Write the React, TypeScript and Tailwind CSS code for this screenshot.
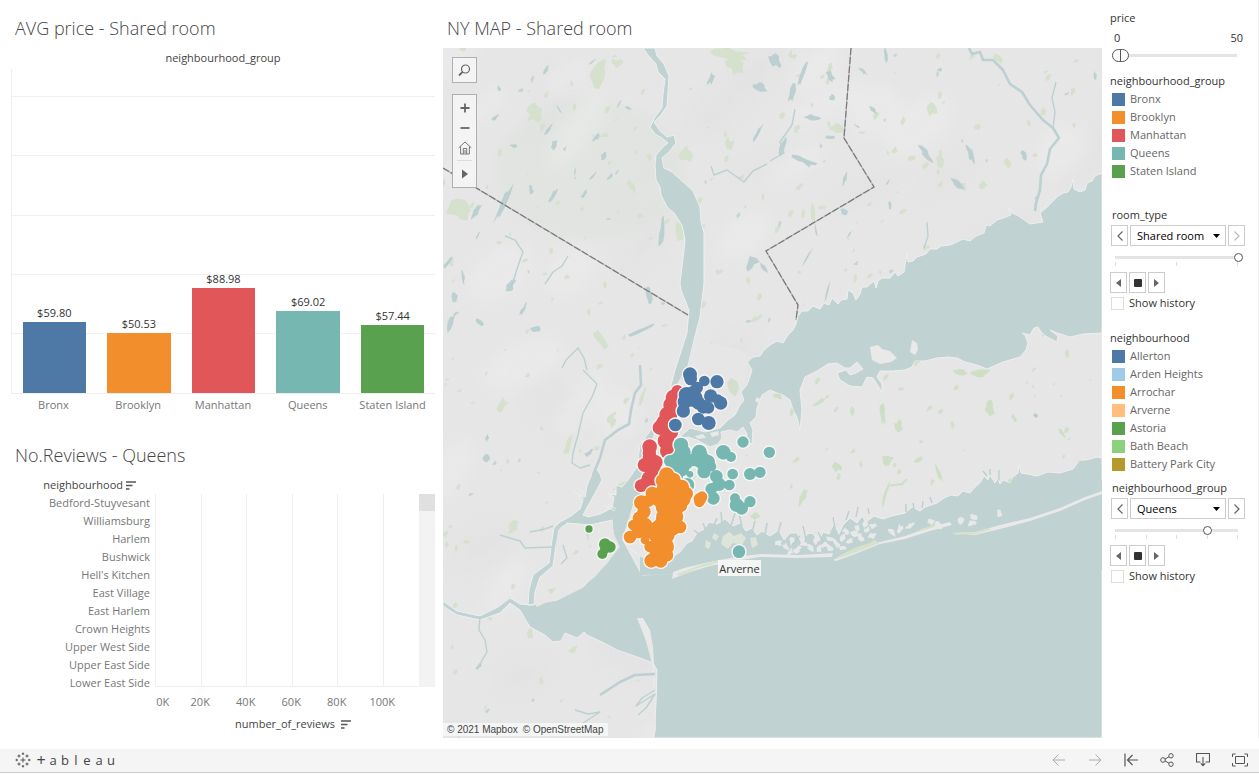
import { useId, useState } from "react";
import type { ReactNode } from "react";

const SANS = "font-['Open_Sans','Noto_Sans',sans-serif]";

type Named = { name: string; color: string };

const boroughs: (Named & { value: number })[] = [
  { name: "Bronx", color: "#4e79a7", value: 59.8 },
  { name: "Brooklyn", color: "#f28e2b", value: 50.53 },
  { name: "Manhattan", color: "#e15759", value: 88.98 },
  { name: "Queens", color: "#76b7b2", value: 69.02 },
  { name: "Staten Island", color: "#59a14f", value: 57.44 },
];

const neighbourhoods: Named[] = [
  { name: "Allerton", color: "#4e79a7" },
  { name: "Arden Heights", color: "#a0cbe8" },
  { name: "Arrochar", color: "#f28e2b" },
  { name: "Arverne", color: "#ffbe7d" },
  { name: "Astoria", color: "#59a14f" },
  { name: "Bath Beach", color: "#8cd17d" },
  { name: "Battery Park City", color: "#b6992d" },
];

const reviewRows = [
  "Bedford-Stuyvesant",
  "Williamsburg",
  "Harlem",
  "Bushwick",
  "Hell's Kitchen",
  "East Village",
  "East Harlem",
  "Crown Heights",
  "Upper West Side",
  "Upper East Side",
  "Lower East Side",
];

/* ---------- Map data, in map units ---------- */

/* Long Island Sound and the East River; the island is painted over it. */
const SOUND =
  "M1102 173L1095 176 1092 181 1087 183 1085 190 1080 192 1074 189 1073 179 1071 187 1068 192 1063 193 1057 197 1053 201 1046 208 1040 213 1043 222 1030 224 1023 219 1017 215 1012 213 1008 207 1011 215 1003 218 997 220 990 226 986 225 984 233 976 236 970 241 963 239 957 242 950 245 941 246 937 249 930 249 926 254 917 257 913 261 908 262 907 254 905 265 904 272 898 276 895 272 890 278 882 278 878 281 876 288 874 281 867 287 862 287 860 294 856 300 853 293 848 290 847 299 841 300 838 304 832 298 829 305 824 303 820 309 813 306 808 311 802 311 798 316 796 324 793 330 788 335 783 343 777 341 770 345 764 350 760 356 753 357 747 362 752 370 747 385 741 392 744 400 740 405 735 415 728 420 720 428 705 432 690 428 680 437 668 462 650 490 636 497 640 545 700 565 1102 560 Z";

/* Ocean, Raritan Bay, harbour and Hudson. */
const OCEAN =
  "M645 480L638 500 632 515 623 540 642 575 770 570 1102 480 1102 738 654 738 656 703 657 670 653 663 640 658 617 650 604 643 587 635 584 632 577 638 570 635 565 633 561 641 553 642 545 635 530 627 524 617 520 610 510 603 500 613 480 620 457 615 443 606 443 601 457 611 480 616 498 607 510 598 520 604 530 605 557 600 583 587 607 563 617 548 613 533 612 520 590 525 567 523 560 530 556 545 553 566 540 577 535 592 534 605 528 605 529 590 533 575 549 563 552 540 554 528 560 522 571 516 580 509 583 500 578 495 585 497 587 486 590 478 596 468 600 474 602 480 594 495 583 515 588 517 600 514 612 508 614 497 608 494 616 495 616 485 622 487 628 480 637 467 640 445 653 427 667 400 675 370 687 333 689 310 681 290 680 283 684 250 685 240 682 225 674 213 667 207 661 195 660 187 656 180 655 165 656 155 664 146 668 143 662 138 655 134 650 127 655 117 662 108 663 94 665 79 658 72 656 64 648 55 643 48 655 48 657 56 664 64 669 76 668 92 667 106 661 115 654 122 660 131 667 137 674 135 676 143 669 152 662 158 664 168 672 172 682 181 693 191 697 200 700 207 701 222 704 233 704 283 700 317 694 340 687 370 678 400 670 425 657 450 Z";

const LONG_ISLAND =
  "M677 440L688 437 697 440 710 447 718 444 722 438 721 432 730 430 737 432 743 427 747 434 746 442 752 444 753 430 750 423 756 417 757 408 762 395 770 390 777 393 783 395 790 400 793 410 797 417 800 430 802 410 800 390 805 377 817 371 828 364 837 363 845 368 850 368 857 362 863 369 856 373 850 375 846 370 837 373 840 380 850 386 862 387 867 377 873 378 882 392 882 384 877 377 880 371 893 371 905 370 912 367 915 361 925 361 937 358 948 357 957 358 965 362 977 365 987 369 1003 362 1020 357 1026 350 1028 343 1025 335 1022 333 1030 335 1034 328 1038 327 1041 332 1047 337 1057 342 1058 336 1050 330 1057 333 1070 337 1083 334 1102 333 1102 458 1097 457 1090 459 1085 460 1080 460 1073 469 1060 473 1048 472 1037 476 1027 474 1021 473 1019 465 1018 473 1012 478 1010 483 1003 480 1000 484 998 478 995 483 990 475 988 480 984 476 980 483 975 487 970 493 963 491 958 496 951 495 944 498 937 503 925 507 920 511 912 507 905 513 892 516 883 519 874 516 866 522 862 516 857 523 850 518 843 525 839 534 834 523 829 534 823 532 819 541 812 533 807 534 802 544 797 533 790 533 784 540 779 530 770 536 762 531 757 535 752 528 746 531 740 523 733 526 725 519 717 524 709 522 704 529 697 533 692 541 687 543 680 552 673 557 660 562 642 557 632 550 623 540 627 525 630 517 634 503 641 495 652 486 664 470 672 450 Z";

const STATEN =
  "M563 525L590 527 612 522 614 534 620 547 607 563 595 577 583 586 570 594 557 599 545 603 537 607 534 603 539 585 541 580 550 573 556 560 556 545 558 530 Z";

const MANHATTAN = "M682 375L684 388 680 410 672 440 664 465 650 485 643 490 641 478 648 450 657 425 668 400 Z";
const BRONX =
  "M694 340L740 350 752 358 747 364 744 372 748 384 740 391 743 400 737 404 733 413 725 417 715 426 700 428 688 424 680 415 681 390 688 365 Z";

const ISLANDS = [
  "M870 347L878 345 882 349 890 351 897 358 891 362 880 364 872 360 Z",
  "M912 340L917 343 918 350 915 355 910 352 Z",
  "M710 433L718 431 719 435 712 437 Z",
  "M695 436L703 434 706 438 698 439 Z",
  "M757 397L760 399 758 403 755 401 Z",
  "M637 618L643 618 650 630 653 647 655 680 656 730 654 737 654 690 652 664 646 641 Z",
  "M672 579L673 572 684 568 705 563 735 557 760 554 800 555 833 553 832 557 795 558 760 557 735 561 710 566 690 572 Z",
  "M833 560L845 553 865 546 880 542 905 536 930 527 950 522 952 525 930 531 905 539 880 544 850 556 836 561 Z",
  "M950 533L975 532 1000 525 1030 518 1060 508 1085 497 1102 491 1102 494 1085 500 1060 511 1030 521 1000 529 975 535 Z",
];

/* Jamaica Bay, cut out of Long Island, with its marsh islands. */
const JAMAICA =
  "M699 552L697 540 703 533 712 530 720 524 730 527 740 528 749 533 757 537 764 543 770 551 750 553 735 555 718 558 706 562 Z";
const JAMAICA_ISLANDS = [
  "M723 536L729 532 734 536 741 533 746 538 742 545 733 543 728 549 721 544 Z",
  "M714 533L719 536 716 541 712 538 Z",
  "M750 538L756 537 758 545 752 548 Z",
  "M706 540L711 543 709 549 705 547 Z",
];

const MARSH: [number, number][] = [
  [778, 543], [786, 547], [792, 540], [797, 550], [804, 544], [811, 548], [816, 540], [824, 545],
  [831, 539], [837, 544], [843, 537], [849, 541], [855, 534], [861, 538], [867, 530], [872, 536],
  [846, 531], [857, 528], [865, 524], [873, 526], [830, 548], [819, 549], [790, 552], [842, 548],
  [892, 533], [900, 529], [910, 526], [931, 522], [938, 525], [961, 520], [972, 523], [974, 517], [1000, 514],
];

/* lakes: x, y, half length, half width, angle */
const LAKES: number[][] = [
  [503, 203, 24, 3, -66], [476, 211, 10, 3, -55], [662, 233, 17, 3, -85], [649, 295, 9, 4, 90],
  [546, 70, 7, 2, -70], [499, 89, 4, 2, 70], [495, 118, 5, 2, -40], [548, 130, 7, 2, -50],
  [559, 109, 4, 1, 60], [554, 145, 6, 3, -70], [514, 146, 4, 2, 0], [597, 137, 6, 2, -45],
  [604, 156, 5, 3, -65], [619, 104, 6, 1, -60], [628, 108, 4, 2, 20], [531, 190, 5, 3, 80],
  [553, 195, 8, 2, -60], [584, 194, 6, 2, -60], [593, 176, 7, 1, -50], [610, 177, 5, 2, -50],
  [575, 172, 5, 1, -80], [478, 235, 5, 1, -60], [448, 262, 8, 2, -50], [463, 277, 7, 2, 80],
  [454, 297, 6, 3, -70], [510, 286, 9, 5, -60], [451, 322, 11, 3, -70], [480, 322, 5, 3, 50],
  [535, 329, 5, 4, 20], [523, 310, 8, 2, -60], [640, 331, 17, 2, -25], [711, 78, 8, 3, -70],
  [760, 87, 8, 5, 30], [775, 60, 9, 5, 60], [758, 133, 10, 2, -60], [752, 262, 9, 6, -55],
  [764, 268, 9, 2, 50], [792, 93, 10, 4, -70], [802, 75, 14, 2, -70], [830, 76, 9, 4, 70],
  [832, 98, 4, 3, 40], [812, 118, 10, 4, 0], [831, 137, 7, 2, 0], [805, 161, 13, 4, 22],
  [783, 146, 13, 3, -75], [845, 178, 8, 2, -75], [844, 212, 4, 3, 20], [857, 126, 4, 1, 30],
  [886, 56, 8, 2, 85], [863, 71, 6, 2, 40], [873, 110, 5, 2, 40], [926, 154, 13, 3, 50],
  [970, 153, 12, 3, 70], [956, 183, 9, 3, 40], [1024, 155, 6, 3, 60], [1095, 76, 5, 2, 90],
  [890, 205, 5, 2, 90], [808, 256, 10, 1, -60], [816, 230, 7, 1, 80], [827, 293, 12, 1, -75],
  [888, 182, 4, 1, -60], [940, 70, 3, 2, 20], [849, 235, 5, 1, -60], [487, 458, 5, 4, 20],
  [487, 438, 4, 2, 90], [589, 453, 5, 3, -40], [479, 666, 6, 2, -45], [592, 62, 6, 1, -40],
];

const PARKS: number[][] = [
  [461, 210, 16, 13, 30], [598, 75, 18, 8, -65], [617, 63, 7, 5, 0], [535, 113, 10, 9, -30],
  [730, 53, 20, 6, 10], [735, 66, 10, 8, 40], [685, 153, 8, 8, 20], [729, 145, 5, 7, 0],
  [679, 231, 4, 12, -10], [697, 204, 3, 9, 35], [632, 187, 10, 3, 60], [602, 340, 5, 12, -35],
  [567, 277, 3, 3, 0], [837, 128, 8, 6, 0], [932, 108, 5, 9, -10], [940, 160, 4, 10, 0],
  [813, 212, 2, 14, -5], [977, 127, 3, 4, 0], [983, 185, 5, 4, 0], [1008, 163, 4, 5, 0],
  [926, 247, 4, 3, 0], [998, 58, 6, 3, 45], [1044, 112, 3, 5, 20], [502, 405, 5, 9, 30],
  [568, 445, 3, 12, 15], [642, 397, 3, 10, 20], [612, 421, 5, 6, 0], [622, 486, 9, 4, -30],
  [513, 527, 5, 8, 30], [530, 634, 3, 7, 0], [573, 650, 6, 3, -40],
];

const LI_PARKS: number[][] = [
  [887, 461, 8, 6, 0], [836, 467, 6, 5, 30], [898, 427, 6, 7, 20], [990, 408, 5, 9, 0],
  [1016, 484, 9, 6, 0], [803, 497, 3, 10, 25], [886, 493, 2, 15, 15], [883, 415, 3, 12, -5],
  [939, 474, 2, 13, -20], [852, 411, 3, 5, 0], [820, 402, 9, 2, -35], [980, 373, 11, 5, 0],
  [918, 460, 6, 2, -30], [1014, 418, 2, 5, -40], [1062, 433, 2, 5, -30], [693, 547, 9, 6, 10],
  [755, 517, 5, 4, 0], [960, 372, 7, 3, 10], [778, 396, 5, 3, 10], [792, 412, 2, 6, 0],
];

const RIVERS = [
  "M969 48L972 54 980 52 983 60 993 60 1003 70 1010 84 1022 92 1030 105 1043 120 1053 128 1059 138 1050 149 1047 164 1041 175 1040 190 1036 203 1035 211",
  "M1053 128L1055 112 1052 98 1056 82",
  "M770 161L784 153 780 142 792 125 795 109",
  "M711 166L714 175 727 170 744 182 753 171 767 164",
  "M927 222L928 236 924 248",
  "M583 370L597 384 592 397 583 413 578 435 573 453 572 463 580 468 590 465",
  "M640 365L641 385 635 393 631 410 629 424 618 430 605 440 600 458 593 475",
  "M500 535L520 541 525 548 552 547",
  "M530 532L545 529 553 526",
  "M563 545L567 558 561 564",
  "M480 616L479 630 485 640 487 652 481 662",
  "M505 236L515 240 523 252 518 266 513 282",
  "M562 368L566 360 578 348 584 358 587 370",
  "M545 284L553 272 562 266 568 256",
  "M600 695L620 682 635 675 655 674",
  "M575 710L588 714 600 712 580 725",
  "M655 690L642 698 636 706 655 694 646 708 638 715",
];

type Dot = [number, number, number];
const DOTS: { color: string; dots: Dot[] }[] = [
  {
    color: "#e15759",
    dots: [
      [322, 78, 16], [310, 97, 21], [305, 120, 23], [295, 150, 25], [287, 178, 28], [270, 188, 20], [300, 200, 23],
      [288, 228, 23], [293, 258, 21], [325, 95, 20], [325, 120, 18], [239, 245, 20], [238, 265, 18], [224, 300, 19],
      [256, 292, 20], [240, 300, 24], [252, 320, 20], [237, 340, 20], [213, 362, 17], [240, 360, 20], [255, 340, 18],
      [226, 352, 14], [240, 280, 20],
    ],
  },
  {
    color: "#4e79a7",
    dots: [
      [360, 28, 19], [362, 42, 17], [403, 48, 14], [441, 50, 18], [381, 68, 16], [350, 90, 22], [372, 100, 24],
      [345, 110, 20], [340, 138, 18], [422, 93, 18], [452, 114, 18], [400, 125, 19], [415, 128, 16], [385, 162, 17],
      [416, 174, 19], [316, 180, 17], [444, 104, 14], [370, 82, 18], [385, 114, 18],
    ],
  },
  {
    color: "#76b7b2",
    dots: [
      [333, 240, 20], [338, 262, 22], [300, 288, 16], [320, 290, 24], [345, 290, 24], [388, 262, 21], [372, 284, 18],
      [395, 285, 24], [415, 290, 18], [402, 320, 18], [335, 312, 20], [320, 330, 18], [352, 360, 19], [360, 328, 8],
      [460, 262, 20], [483, 276, 13], [519, 231, 15], [598, 262, 15], [488, 327, 14], [540, 327, 16], [570, 322, 15],
      [439, 334, 17], [447, 358, 18], [424, 372, 16], [430, 400, 17], [478, 360, 14], [495, 400, 13], [500, 420, 19],
      [515, 430, 17], [540, 410, 15], [507, 560, 17], [425, 305, 12], [415, 300, 18], [333, 275, 22],
    ],
  },
  {
    color: "#f28e2b",
    dots: [
      [290, 330, 21], [277, 347, 18], [310, 345, 20], [335, 366, 20], [348, 386, 19], [340, 402, 20], [320, 370, 25],
      [290, 370, 28], [247, 385, 18], [214, 413, 20], [235, 408, 16], [262, 395, 20], [222, 440, 18], [210, 460, 20],
      [190, 480, 14], [180, 516, 17], [205, 500, 18], [225, 480, 20], [235, 500, 17], [225, 525, 11], [283, 425, 24],
      [305, 400, 32], [310, 430, 28], [330, 420, 20], [288, 458, 28], [286, 478, 30], [310, 470, 25], [330, 486, 17],
      [264, 490, 22], [268, 515, 26], [290, 510, 22], [240, 545, 15], [262, 548, 25], [285, 545, 25], [290, 570, 18],
      [244, 587, 19], [272, 588, 18], [262, 572, 22], [318, 455, 20], [308, 490, 20], [390, 402, 17], [396, 395, 14],
      [388, 412, 13], [255, 510, 18], [265, 405, 18],
    ],
  },
  { color: "#59a14f", dots: [[57, 492, 9], [105, 538, 16], [120, 546, 15], [97, 567, 13], [104, 554, 12]] },
];

function seeded(seed: number) {
  let s = seed;
  return () => {
    s = (s * 16807) % 2147483647;
    return s / 2147483647;
  };
}

/* An uneven patch, long along the given angle. */
function patch([x, y, a, b, deg]: number[], rnd: () => number) {
  const t = (deg * Math.PI) / 180;
  const n = 11;
  let d = "";
  for (let i = 0; i < n; i++) {
    const w = (i / n) * Math.PI * 2;
    const k = 0.5 + rnd() * 0.7;
    const px = Math.cos(w) * a * k;
    const py = Math.sin(w) * b * k;
    const qx = x + px * Math.cos(t) - py * Math.sin(t);
    const qy = y + px * Math.sin(t) + py * Math.cos(t);
    d += `${i ? "L" : "M"}${qx.toFixed(1)} ${qy.toFixed(1)}`;
  }
  return d + "Z";
}

function scatter(count: number, seed: number, max: number) {
  const rnd = seeded(seed);
  let d = "";
  for (let i = 0; i < count; i++) {
    const s = 1 + rnd() * max;
    d += patch([443 + rnd() * 659, 48 + rnd() * 690, s * 1.5, s * 0.8, -100 + rnd() * 90], rnd);
  }
  return d;
}

const joinPatches = (list: number[][], seed: number) => {
  const rnd = seeded(seed);
  return list.map((p) => patch(p, rnd)).join("");
};

const parksPath = joinPatches(PARKS, 11);
const liParksPath = joinPatches(LI_PARKS, 23);
const lakesPath = joinPatches(LAKES, 37);
const marshPath = joinPatches(MARSH.map(([x, y], i) => [x, y, 5, 3, i * 47]), 5);
const smallParks = scatter(320, 77, 2.6);
const liSmallParks = scatter(330, 913, 2.2);
const smallLakes = scatter(60, 4021, 1.5);

const reliefRnd = seeded(99);
const relief = Array.from({ length: 60 }, (_, i) => ({
  x: 443 + reliefRnd() * 659,
  y: 48 + reliefRnd() * 690,
  rx: 15 + reliefRnd() * 30,
  ry: 10 + reliefRnd() * 16,
  a: -60 + reliefRnd() * 40,
  light: i % 2 === 0,
}));

const BORDERS = ["M443 168L688 315", "M851 48L844 138 874 187 766 251 798 305 796 320"];

function MapDrawing() {
  return (
    <svg viewBox="443 48 659 690" className="block w-full" role="img" aria-label="Map of New York listings">
      <defs>
        <clipPath id="li">
          <path d={LONG_ISLAND} />
          <path d={STATEN} />
        </clipPath>
        <filter id="soft" x="-40%" y="-60%" width="180%" height="220%">
          <feGaussianBlur stdDeviation="7" />
        </filter>
      </defs>
      <rect x="443" y="48" width="659" height="690" fill="#e6e6e6" />
      <ellipse cx="590" cy="170" rx="95" ry="70" fill="#e1e4e1" filter="url(#soft)" />
      {relief.map((r, i) => (
        <ellipse
          key={i}
          cx={r.x}
          cy={r.y}
          rx={r.rx}
          ry={r.ry}
          transform={`rotate(${r.a} ${r.x} ${r.y})`}
          fill={r.light ? "#efefef" : "#e0e1e0"}
          opacity={0.4}
          filter="url(#soft)"
        />
      ))}
      <path d={smallParks} fill="#d6e0cf" />
      <path d={parksPath} fill="#d5e0cd" />
      <path d={smallLakes} fill="#c4d4d4" />
      <path d={lakesPath} fill="#bdd0d1" />
      <path d={SOUND} fill="#c0d2d2" stroke="#eef0f0" strokeWidth="1" />
      <path d={OCEAN} fill="#c0d2d2" stroke="#eef0f0" strokeWidth="1" />
      <path d="M640 500L640 575 1102 570 1102 480Z" fill="#c0d2d2" />
      <path d={MANHATTAN} fill="#e6e6e6" />
      <path d={BRONX} fill="#e6e6e6" />
      <path d="M731 378l6 3 2 8-4 8-6-6-2-8z" fill="#d3dfcb" />
      <path d={LONG_ISLAND} fill="#e6e6e6" stroke="#eeefee" strokeWidth="1" />
      <path d={STATEN} fill="#e6e6e6" />
      <g clipPath="url(#li)">
        <path d={liSmallParks} fill="#d3dfcd" />
        <path d={liParksPath} fill="#cfdfc6" />
        <path d="M887 486l15-2 5-5" fill="none" stroke="#cfdfc6" strokeWidth="2" />
      </g>
      <path d="M1035 413l3 2-1 3-4-2z" fill="#b5cbcd" />
      <path d={JAMAICA} fill="#c0d2d2" />
      {JAMAICA_ISLANDS.map((d) => (
        <path key={d} d={d} fill="#dde4da" />
      ))}
      {ISLANDS.map((d) => (
        <path key={d} d={d} fill="#e8e9e8" />
      ))}
      <path d="M834 560l20-12 16-5 4-3 5 3-25 10z" fill="#d6e2c8" />
      <path d="M955 534l20-1 15-4M678 575l20-8 22-6M921 530l16-5" fill="none" stroke="#d6e2c8" strokeWidth="2" />
      <path d={marshPath} fill="#e7e8e7" />
      <path
        d="M792 545l8-9M806 540l-3-14M818 532l5 10M835 528l-2-11M846 520l3-9M856 517l2-10M869 514l-1-6M906 512v-8M914 509l-1-6M922 508l1-7M932 503l-2-6M987 476l-4-5M990 475v-6M999 480v-10"
        fill="none"
        stroke="#b9cfcd"
        strokeWidth="1.3"
      />
      <path
        d="M712 530l5-12M722 524l-1-12M731 526l4-13M742 527l-3-14M752 533l3-12M765 535l2-12M778 533l3-11M700 535l-6-5M706 531l-3-8"
        fill="none"
        stroke="#bfd2cd"
        strokeWidth="1.6"
      />
      <path d="M606 503l10 6M604 505l11 6M574 491l10 8M578 488l8 6" stroke="#eceeee" strokeWidth="1" />
      {RIVERS.map((d, i) => (
        <path
          key={d}
          d={d}
          fill="none"
          stroke="#bdd0d1"
          strokeLinejoin="round"
          strokeWidth={i === 0 || i === 6 || i === 14 ? 2.6 : 1.4}
        />
      ))}
      {BORDERS.map((d) => (
        <g key={d} fill="none">
          <path d={d} stroke="#b4b4b4" strokeWidth="1.2" />
          <path d={d} stroke="#7a7a7a" strokeWidth="1.2" strokeDasharray="7 2" />
        </g>
      ))}
      <g transform="translate(570 365) scale(0.33333)">
        {DOTS.map((g) => (
          <g key={g.color}>
            {g.dots.map(([x, y, r], i) => (
              <circle key={i} cx={x} cy={y} r={r + 6} fill="#f7f7f7" />
            ))}
            {g.dots.map(([x, y, r], i) => (
              <circle key={i} cx={x} cy={y} r={r + 2} fill={g.color} />
            ))}
          </g>
        ))}
      </g>
      <rect x="718" y="560" width="43" height="16" fill="#f4f5f5" />
      <text x="739.5" y="572.5" textAnchor="middle" className="fill-[#333] font-['Open_Sans'] text-[11px]">
        Arverne
      </text>
    </svg>
  );
}

/* ---------- Shared parts ---------- */

function Title({ children }: { children: ReactNode }) {
  return <h2 className="text-lg leading-7 font-light text-[#444]">{children}</h2>;
}

function SortIcon() {
  return (
    <svg width="10" height="9" viewBox="0 0 10 9" stroke="#555" strokeWidth="1.6" aria-hidden="true">
      <path d="M0 1H10M0 4.5H6.5M0 8H3.5" />
    </svg>
  );
}

function PriceChart() {
  return (
    <section className="pr-2 pl-[11px]">
      <div className="pl-1">
        <Title>AVG price - Shared room</Title>
      </div>
      <p className="pt-[7px] text-center text-[11px] leading-[18px] text-[#444]">neighbourhood_group</p>
      <div className="relative mt-0.5 h-[325px] border-b border-l border-[#eee]">
        {[50, 100, 150, 200, 250].map((v) => (
          <div
            key={v}
            className="absolute inset-x-0 border-t border-[#f0f0f0]"
            style={{ bottom: `${(v / 273.8) * 100}%` }}
          />
        ))}
        <div className="relative grid h-full grid-cols-5">
          {boroughs.map((b) => (
            <div key={b.name} className="flex h-full flex-col items-center justify-end">
              <span className="text-[11px] leading-[18px] text-[#333]">${b.value.toFixed(2)}</span>
              <div className="w-3/4" style={{ height: `${(b.value / 273.8) * 100}%`, backgroundColor: b.color }} />
            </div>
          ))}
        </div>
      </div>
      <div className="grid grid-cols-5 pt-0.5 text-center text-[11px] leading-[18px] text-[#777]">
        {boroughs.map((b) => (
          <span key={b.name} className="whitespace-nowrap">
            {b.name}
          </span>
        ))}
      </div>
    </section>
  );
}

function ReviewsChart() {
  return (
    <section className="pt-[27px] pr-2 pl-[15px]">
      <Title>No.Reviews - Queens</Title>
      <div className="flex w-[121px] items-center justify-end gap-[3px] pt-[7px] text-[11px] leading-[18px] text-[#444]">
        neighbourhood
        <SortIcon />
      </div>
      <div className="flex h-[193px]">
        <ul className="w-[140px] shrink-0 pr-[5px] text-right text-[11px] leading-[18px] text-[#777]">
          {reviewRows.map((r) => (
            <li key={r}>{r}</li>
          ))}
        </ul>
        <div className="flex flex-1 border-b border-[#eee]">
          {[0, 1, 2, 3, 4].map((i) => (
            <div key={i} className="w-[17.25%] border-l border-[#eee]" />
          ))}
          <div className="flex-1 border-l border-[#eee]" />
        </div>
        <div className="w-4 bg-[#f3f3f3]">
          <div className="h-[17px] bg-[#e0e0e0]" />
        </div>
      </div>
      <div className="pr-[30px] pl-[117px]">
        <div className="grid grid-cols-6 pt-1.5 text-center text-[11px] leading-[18px] text-[#777]">
          <span className="pl-4">0K</span>
          {["20K", "40K", "60K", "80K", "100K"].map((t) => (
            <span key={t}>{t}</span>
          ))}
        </div>
      </div>
      <div className="flex items-center gap-1.5 pt-1 pl-[220px] text-[11px] leading-[18px] text-[#444]">
        number_of_reviews
        <SortIcon />
      </div>
    </section>
  );
}

function MapPanel() {
  const tool = "flex h-5 w-full items-center justify-center text-[#666]";
  return (
    <section>
      <div className="pl-1">
        <Title>NY MAP - Shared room</Title>
      </div>
      <div className="relative mt-1.5">
        <MapDrawing />
        <div className="absolute top-[9px] left-[9px] flex w-[25px] flex-col gap-[11px]">
          <button
            aria-label="Search map"
            className="flex h-[26px] items-center justify-center border border-[#b0b0b0] bg-[#f4f4f4]"
          >
            <svg width="13" height="13" viewBox="0 0 13 13" fill="none" stroke="#666" strokeWidth="1.2">
              <circle cx="7.5" cy="5" r="4" />
              <path d="M4.6 7.8L1 11.5" strokeWidth="1.8" />
            </svg>
          </button>
          <div className="border border-[#b0b0b0] bg-[#f4f4f4] pt-[3px]">
            <button aria-label="Zoom in" className={tool}>
              <svg width="10" height="10" viewBox="0 0 10 10" stroke="#666" strokeWidth="1.8">
                <path d="M0.5 5H9.5M5 0.5V9.5" />
              </svg>
            </button>
            <button aria-label="Zoom out" className={tool}>
              <svg width="10" height="10" viewBox="0 0 10 10" stroke="#666" strokeWidth="1.8">
                <path d="M0.5 5H9.5" />
              </svg>
            </button>
            <button aria-label="Reset view" className={tool}>
              <svg width="14" height="14" viewBox="0 0 14 14" fill="none" stroke="#777" strokeWidth="1">
                <path d="M0.7 6.8L7 1L13.3 6.8M2.6 5.5V13H11.4V5.5M5.3 13V7.5H8.7V13M7 9V12" />
              </svg>
            </button>
            <div className="mx-1 mt-0.5 border-t border-[#ddd]" />
            <button aria-label="Show map tools" className="flex h-[26px] w-full items-center justify-center">
              <svg width="8" height="10" viewBox="0 0 8 10" fill="#666">
                <path d="M1 0.5L7 5L1 9.5Z" />
              </svg>
            </button>
          </div>
        </div>
        <p className="absolute bottom-0.5 left-0 flex gap-[5px] bg-[#f4f5f5] px-1 font-['Liberation_Sans',sans-serif] text-[10px] leading-[13px] text-[#444]">
          <a href="#mapbox">© 2021 Mapbox</a>
          <a href="#osm">© OpenStreetMap</a>
        </p>
      </div>
    </section>
  );
}

/* ---------- Filters ---------- */

function Legend({ title, items }: { title: string; items: Named[] }) {
  return (
    <div className="text-[11px] leading-[18px]">
      <h3 className="text-[#333]">{title}</h3>
      <ul className="pl-0.5 text-[#666]">
        {items.map((n) => (
          <li key={n.name} className="flex items-center gap-[5px] whitespace-nowrap">
            <span className="size-[13px]" style={{ backgroundColor: n.color }} />
            {n.name}
          </li>
        ))}
      </ul>
    </div>
  );
}

const halfThumb =
  "pointer-events-none col-start-1 row-start-1 h-[13px] w-[calc(100%-9px)] appearance-none bg-transparent [&::-webkit-slider-thumb]:pointer-events-auto [&::-webkit-slider-thumb]:h-[13px] [&::-webkit-slider-thumb]:w-[9px] [&::-webkit-slider-thumb]:appearance-none [&::-webkit-slider-thumb]:border [&::-webkit-slider-thumb]:border-[#555] [&::-webkit-slider-thumb]:bg-white";

function PriceFilter() {
  return (
    <fieldset className="min-w-0 pr-[15px] text-[11px] leading-[18px] text-[#333]">
      <legend>price</legend>
      <div className="flex justify-between pt-0.5 pl-1">
        <span>0</span>
        <span>50</span>
      </div>
      <div className="mt-0.5 mr-1.5 ml-0.5 grid grid-cols-1 items-center">
        <div className="col-start-1 row-start-1 h-[3px] bg-[#e4e4e4]" />
        <input
          type="range"
          aria-label="Lowest price"
          min={0}
          max={50}
          defaultValue={0}
          className={`${halfThumb} [&::-webkit-slider-thumb]:rounded-l-full`}
        />
        <input
          type="range"
          aria-label="Highest price"
          min={0}
          max={50}
          defaultValue={0}
          className={`${halfThumb} ml-2 [&::-webkit-slider-thumb]:rounded-r-full`}
        />
      </div>
    </fieldset>
  );
}

function Pager({ title, options, start }: { title: string; options: string[]; start: number }) {
  const id = useId();
  const [at, setAt] = useState(start);
  const last = options.length - 1;
  const step =
    "flex h-[21px] w-[17px] items-center justify-center border border-[#ccc] text-[#666] disabled:text-[#bbb]";
  const play = "flex h-[21px] w-[17px] items-center justify-center border border-[#ccc]";
  return (
    <div className="text-[11px] leading-[18px] text-[#333]">
      <label htmlFor={id} className="block pl-0.5">
        {title}
      </label>
      <div className="mt-px flex gap-0.5 pl-px">
        <button aria-label={`Previous ${title}`} disabled={at === 0} onClick={() => setAt(at - 1)} className={step}>
          <svg width="6" height="10" viewBox="0 0 6 10" fill="none" stroke="currentColor" strokeWidth="1.2">
            <path d="M5.5 0.5L1 5L5.5 9.5" />
          </svg>
        </button>
        <div className="grid w-24 items-center">
          <select
            id={id}
            value={at}
            onChange={(e) => setAt(Number(e.target.value))}
            className="col-start-1 row-start-1 h-[21px] appearance-none border border-[#ccc] bg-white pl-1.5 text-[11px] text-black"
          >
            {options.map((o, i) => (
              <option key={o} value={i}>
                {o}
              </option>
            ))}
          </select>
          <svg
            className="pointer-events-none col-start-1 row-start-1 mr-1.5 justify-self-end"
            width="7"
            height="4"
            viewBox="0 0 7 4"
            aria-hidden="true"
          >
            <path d="M0 0H7L3.5 4Z" />
          </svg>
        </div>
        <button aria-label={`Next ${title}`} disabled={at === last} onClick={() => setAt(at + 1)} className={step}>
          <svg width="6" height="10" viewBox="0 0 6 10" fill="none" stroke="currentColor" strokeWidth="1.2">
            <path d="M0.5 0.5L5 5L0.5 9.5" />
          </svg>
        </button>
      </div>
      <div className="mt-[7px] grid w-[133px] items-center">
        <div className="col-start-1 row-start-1 mx-[5px] h-[3px] bg-[#e4e4e4]" />
        <input
          type="range"
          aria-label={`${title} position`}
          min={0}
          max={last}
          value={at}
          onChange={(e) => setAt(Number(e.target.value))}
          className="col-start-1 row-start-1 h-[9px] appearance-none bg-transparent [&::-webkit-slider-thumb]:size-[9px] [&::-webkit-slider-thumb]:appearance-none [&::-webkit-slider-thumb]:rounded-full [&::-webkit-slider-thumb]:border [&::-webkit-slider-thumb]:border-[#555] [&::-webkit-slider-thumb]:bg-white"
        />
      </div>
      <div className="flex w-[133px] justify-between px-[5px]">
        {options.map((o) => (
          <span key={o} className="h-1 w-px bg-[#ddd]" />
        ))}
      </div>
      <div className="mt-1.5 flex gap-0.5">
        <button aria-label="Play backwards" className={play}>
          <svg width="5" height="8" viewBox="0 0 5 8" fill="#666">
            <path d="M5 0V8L0 4Z" />
          </svg>
        </button>
        <button aria-label="Stop" className={play}>
          <svg width="8" height="8" viewBox="0 0 8 8" fill="#333">
            <rect width="8" height="8" rx="1" />
          </svg>
        </button>
        <button aria-label="Play forwards" className={play}>
          <svg width="5" height="8" viewBox="0 0 5 8" fill="#666">
            <path d="M0 0V8L5 4Z" />
          </svg>
        </button>
      </div>
      <label className="mt-px flex items-center gap-[5px] pl-px">
        <input type="checkbox" className="size-[13px] appearance-none border border-[#ddd] bg-white checked:bg-[#555]" />
        Show history
      </label>
    </div>
  );
}

function Filters() {
  return (
    <aside className="border-r border-[#f0f0f0] pt-[9px] pl-2">
      <PriceFilter />
      <div className="mt-2.5">
        <Legend title="neighbourhood_group" items={boroughs} />
      </div>
      <div className="mt-[26px]">
        <Pager title="room_type" options={["Entire home/apt", "Private room", "Shared room"]} start={2} />
      </div>
      <div className="mt-[17px]">
        <Legend title="neighbourhood" items={neighbourhoods} />
      </div>
      <div className="mt-1.5">
        <Pager title="neighbourhood_group" options={boroughs.map((b) => b.name)} start={3} />
      </div>
    </aside>
  );
}

/* ---------- Footer ---------- */

function TableauMark() {
  return (
    <svg width="16" height="16" viewBox="0 0 16 16" stroke="#555" strokeWidth="1" aria-hidden="true">
      <path d="M8 5.5V10.5M5.5 8H10.5M8 0.5V3M6.8 1.8H9.2M8 13V15.5M6.8 14.2H9.2M1.8 6.8V9.2M0.5 8H3M14.2 6.8V9.2M13 8H15.5M4 2.5V5.5M2.5 4H5.5M12 2.5V5.5M10.5 4H13.5M4 10.5V13.5M2.5 12H5.5M12 10.5V13.5M10.5 12H13.5" />
    </svg>
  );
}

function Footer() {
  return (
    <footer className="flex h-6 items-center justify-between border-b border-[#ccc] bg-[#f5f5f5] pr-[11px] pb-0.5 pl-[15px]">
      <a href="#tableau" aria-label="tableau" className="flex items-center text-[#444]">
        <TableauMark />
        <span className="flex items-center pl-1 text-center text-[13px] leading-5 font-medium">
          <span className="w-3 text-base leading-5">+</span>
          {["a", "b", "l", "e", "a", "u"].map((c, i) => (
            <span key={i} className={i === 2 ? "w-2.5" : "w-3"}>
              {c}
            </span>
          ))}
        </span>
      </a>
      <div className="flex items-center gap-[22px] text-[#555]">
        <button aria-label="Undo" className="text-[#aaa]">
          <svg width="14" height="14" viewBox="0 0 14 14" fill="none" stroke="currentColor">
            <path d="M13 7H1M6.5 1.5L1 7L6.5 12.5" />
          </svg>
        </button>
        <button aria-label="Redo" className="text-[#aaa]">
          <svg width="14" height="14" viewBox="0 0 14 14" fill="none" stroke="currentColor">
            <path d="M1 7H13M7.5 1.5L13 7L7.5 12.5" />
          </svg>
        </button>
        <button aria-label="Reset">
          <svg width="14" height="14" viewBox="0 0 14 14" fill="none" stroke="currentColor" strokeWidth="1.2">
            <path d="M1 0.5V13.5M14 7H3.5M8.5 2L3.5 7L8.5 12" />
          </svg>
        </button>
        <button aria-label="Share">
          <svg width="14" height="14" viewBox="0 0 14 14" fill="none" stroke="currentColor">
            <circle cx="3" cy="7" r="2.3" />
            <circle cx="11" cy="2.8" r="2.2" />
            <circle cx="11" cy="11.2" r="2.2" />
            <path d="M5 6L9 3.8M5 8L9 10.2" />
          </svg>
        </button>
        <button aria-label="Download">
          <svg width="14" height="14" viewBox="0 0 14 14" fill="none" stroke="currentColor" strokeWidth="1.1">
            <path d="M4.5 9H0.5V0.5H13.5V9H9.5M7 4V12.5M4.8 10.3L7 12.7L9.2 10.3" />
          </svg>
        </button>
        <button aria-label="Full screen">
          <svg width="16" height="14" viewBox="0 0 16 14" fill="none" stroke="currentColor" strokeWidth="1">
            <path d="M3.5 3.5H12.5V10.5H3.5ZM0.5 4V1H3.5M12.5 1H15.5V4M15.5 10V13H12.5M3.5 13H0.5V10" />
          </svg>
        </button>
      </div>
    </footer>
  );
}

export default function App() {
  return (
    <div className={`min-h-screen bg-white ${SANS}`}>
      <main className="grid grid-cols-[minmax(0,443fr)_minmax(0,659fr)_157px] pb-[11px]">
        <div className="pt-3.5">
          <PriceChart />
          <ReviewsChart />
        </div>
        <div className="pt-3.5">
          <MapPanel />
        </div>
        <Filters />
      </main>
      <Footer />
    </div>
  );
}
